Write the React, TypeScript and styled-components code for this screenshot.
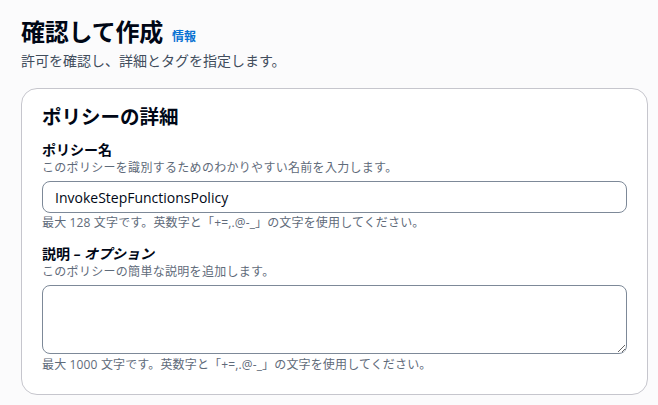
import styled, { createGlobalStyle } from 'styled-components';

const GlobalStyle = createGlobalStyle`
  body {
    margin: 0;
    background-color: #fbfbfc;
    font-family: 'Open Sans', 'Noto Sans CJK JP', sans-serif;
    color: #000716;
  }
`;

const S = {
  Page: styled.div`
    padding: 17px 10px 10px 21px;
  `,

  Header: styled.div`
    display: flex;
    flex-direction: column;
    gap: 4px;
  `,

  TitleRow: styled.div`
    display: flex;
    align-items: baseline;
    gap: 9px;
  `,

  Title: styled.h1`
    margin: 0;
    font-size: 24px;
    line-height: 30px;
    font-weight: 700;
    letter-spacing: -0.2px;
  `,

  InfoLink: styled.a`
    font-size: 12px;
    font-weight: 700;
    color: #0972d3;
    text-decoration: none;
  `,

  Subtitle: styled.p`
    margin: 0;
    font-size: 14px;
    line-height: 20px;
    color: #414d5c;
  `,

  Card: styled.section`
    margin-top: 17px;
    padding: 16px 20px 21px;
    border: 1px solid #c6c6cd;
    border-radius: 16px;
    background-color: #ffffff;
  `,

  CardTitle: styled.h2`
    margin: 0 0 11px;
    font-size: 19.5px;
    line-height: 24px;
    font-weight: 700;
  `,

  Field: styled.div<{ $spaced?: boolean }>`
    display: flex;
    flex-direction: column;
    margin-top: ${({ $spaced }) => ($spaced ? '13px' : '0')};
  `,

  Label: styled.label`
    font-size: 14px;
    line-height: 20px;
    font-weight: 700;

    i {
      font-style: italic;
    }
  `,

  Description: styled.span`
    font-size: 12px;
    line-height: 16px;
    letter-spacing: 0.3px;
    color: #5f6b7a;
    margin-bottom: 5px;
  `,

  Input: styled.input`
    box-sizing: border-box;
    width: 100%;
    height: 32px;
    padding: 4px 12px;
    border: 1px solid #7d8998;
    border-radius: 8px;
    background-color: #ffffff;
    font-family: inherit;
    font-size: 14px;
    color: #000716;
    outline: none;
  `,

  TextArea: styled.textarea`
    box-sizing: border-box;
    width: 100%;
    height: 69px;
    padding: 4px 12px;
    border: 1px solid #7d8998;
    border-radius: 8px;
    background-color: #ffffff;
    font-family: inherit;
    font-size: 14px;
    resize: vertical;
    outline: none;
    display: block;
  `,

  Constraint: styled.span<{ $gap: number }>`
    margin-top: ${({ $gap }) => $gap}px;
    font-size: 12px;
    line-height: 16px;
    letter-spacing: 0.15px;
    color: #5f6b7a;
  `,
};

function App() {
  return (
    <>
      <GlobalStyle />
      <S.Page>
        <S.Header>
          <S.TitleRow>
            <S.Title>確認して作成</S.Title>
            <S.InfoLink href="#">情報</S.InfoLink>
          </S.TitleRow>
          <S.Subtitle>許可を確認し、詳細とタグを指定します。</S.Subtitle>
        </S.Header>

        <S.Card>
          <S.CardTitle>ポリシーの詳細</S.CardTitle>

          <S.Field>
            <S.Label>ポリシー名</S.Label>
            <S.Description>
              このポリシーを識別するためのわかりやすい名前を入力します。
            </S.Description>
            <S.Input defaultValue="InvokeStepFunctionsPolicy" />
            <S.Constraint $gap={2}>
              最大 128 文字です。英数字と「+=,.@-_」の文字を使用してください。
            </S.Constraint>
          </S.Field>

          <S.Field $spaced>
            <S.Label>
              説明 <i>– オプション</i>
            </S.Label>
            <S.Description>このポリシーの簡単な説明を追加します。</S.Description>
            <S.TextArea />
            <S.Constraint $gap={3}>
              最大 1000 文字です。英数字と「+=,.@-_」の文字を使用してください。
            </S.Constraint>
          </S.Field>
        </S.Card>
      </S.Page>
    </>
  );
}

export default App;
